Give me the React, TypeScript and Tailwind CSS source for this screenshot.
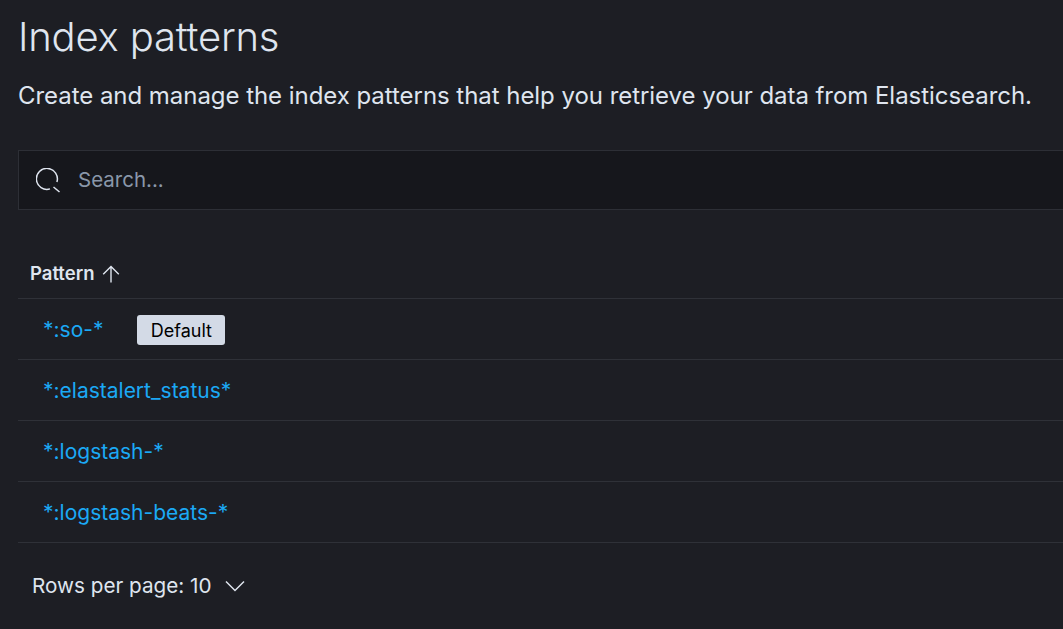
const rows = ['*:so-*', '*:elastalert_status*', '*:logstash-*', '*:logstash-beats-*'];

export default function App() {
  return (
    <div className="h-[629px] w-[1063px] overflow-hidden bg-[#1d1e24] pl-[18px] font-['Inter',sans-serif] text-[#dfe5ef]">
      <h1 className="pt-[13px] text-[40px] font-light leading-[48px] tracking-[-0.2px] text-[#dfe5ef]">Index patterns</h1>
      <p className="mt-[21px] whitespace-nowrap text-[24px] leading-[28px] tracking-[-0.045px] text-[#dfe5ef]">
        Create and manage the index patterns that help you retrieve your data from Elasticsearch.
      </p>

      <div className="mt-[40px] flex h-[60px] w-[1100px] items-center border border-[#2d2f36] bg-[#16171c] pl-[17px]">
        <svg className="h-[25px] w-[25px] text-[#dfe5ef]" viewBox="0 0 25 25" fill="none" stroke="currentColor" strokeWidth="1.5">
          <path d="M14 20.9A10.5 10.5 0 1 1 20.9 14" />
          <path d="M17.5 19l6 5" />
        </svg>
        <span className="ml-[17px] text-[20.5px] text-[#8a97aa]">Search...</span>
      </div>

      <div className="mt-[41px] flex h-[48px] items-center border-b border-[#2f3138] pb-[2px] pl-[12px]">
        <span className="text-[18.5px] font-semibold">Pattern</span>
        <svg className="ml-[8px] h-[18px] w-[18px]" viewBox="0 0 18 18" fill="none" stroke="currentColor" strokeWidth="1.4">
          <path d="M9 17.5V1.5M1.2 9.2 9 1.5l7.8 7.7" />
        </svg>
      </div>

      {rows.map((r, i) => (
        <div key={r} className="flex h-[61px] items-center border-b border-[#2f3138] pl-[25px] pt-[2px]">
          <span className="text-[21px] text-[#1ba9f5]">{r}</span>
          {i === 0 && (
            <span className="ml-[34px] flex h-[30px] w-[88px] items-center justify-center rounded-[3px] bg-[#d3dae6] text-[18px] text-black">Default</span>
          )}
        </div>
      ))}

      <div className="flex h-[85px] items-center pl-[14px]">
        <span className="text-[20.7px]">Rows per page: 10</span>
        <svg className="ml-[13px] h-[12px] w-[20px]" viewBox="0 0 20 12" fill="none" stroke="currentColor" strokeWidth="1.5">
          <path d="M1 1.5 10 10.5 19 1.5" />
        </svg>
      </div>
    </div>
  );
}
